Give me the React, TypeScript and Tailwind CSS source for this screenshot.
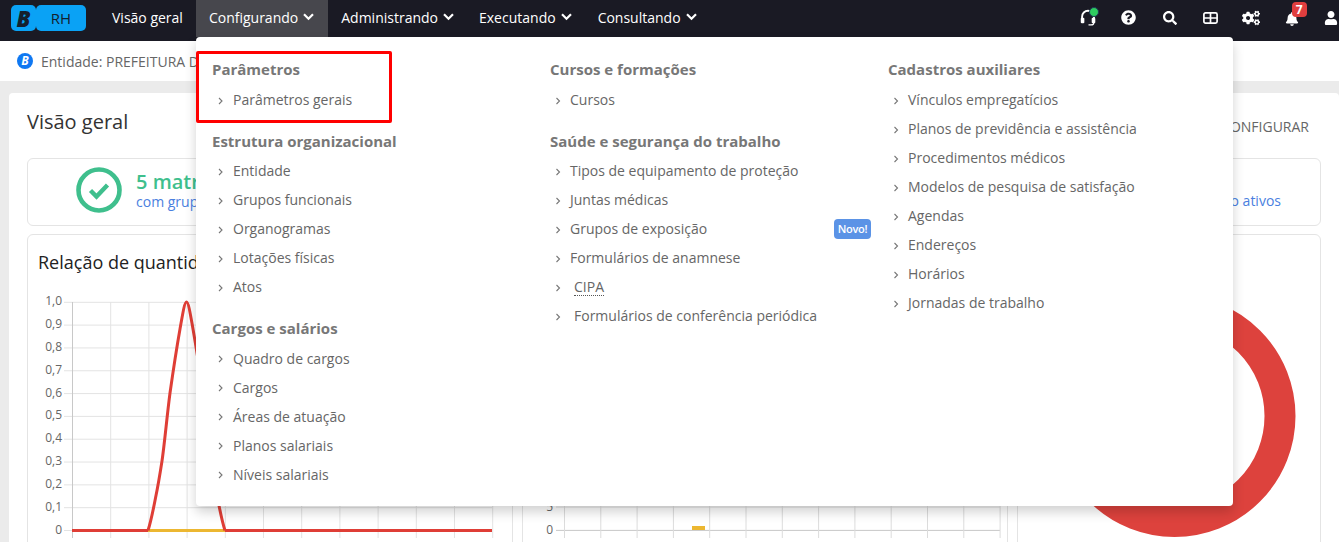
import React from "react";
import { FaBell, FaCogs, FaQuestionCircle, FaSearch, FaUser } from "react-icons/fa";

const Chevron = ({ w = 11 }: { w?: number }) => (
  <svg width={w} height={w * 0.7} viewBox="0 0 11 7.7" className="ml-[5px]" fill="none" stroke="#fff" strokeWidth="2.2">
    <path d="M1 1.2 5.5 5.7 10 1.2" />
  </svg>
);

const NavItem = ({
  label,
  active,
  chevron = true,
  pad = "px-[13px]",
}: {
  label: string;
  active?: boolean;
  chevron?: boolean;
  pad?: string;
}) => (
  <div className={`flex h-[37px] items-center pb-[3px] text-[14px] text-white ${pad} ${active ? "bg-[#47474d]" : ""}`}>
    <span>{label}</span>
    {chevron && <Chevron />}
  </div>
);

const IconCell = ({ children, last }: { children: React.ReactNode; last?: boolean }) => (
  <div className={`relative flex h-[35px] items-center justify-center text-white ${last ? "w-[37.2px]" : "w-[40.8px]"}`}>
    {children}
  </div>
);

const Headset = () => (
  <svg width="17" height="17" viewBox="0 0 18 18" fill="none">
    <path d="M2.2 11V8.2a6.3 6.3 0 0 1 12.6 0V11" stroke="#fff" strokeWidth="2" />
    <rect x="0.8" y="9.2" width="3.8" height="6" rx="1.2" fill="#fff" />
    <rect x="12.4" y="9.2" width="3.8" height="6" rx="1.2" fill="#fff" />
    <path d="M14.6 14.5c0 1.8-1.4 2.4-3 2.4H9" stroke="#fff" strokeWidth="1.3" />
  </svg>
);

const TableIcon = () => (
  <svg width="15" height="12" viewBox="0 0 15 12" fill="none" stroke="#fff" strokeWidth="1.7">
    <rect x="0.9" y="0.9" width="13.2" height="10.2" rx="1.6" />
    <path d="M7.5 1v10M1 6h13" />
  </svg>
);

const Row = ({
  label,
  extra,
  cipa,
  badge,
}: {
  label: string;
  extra?: boolean;
  cipa?: boolean;
  badge?: boolean;
}) => (
  <div className="flex h-[29px] items-center text-[14px] text-[#666]">
    <svg width="20" height="8" viewBox="0 0 20 8" fill="none" stroke="#777" strokeWidth="1.1" className="mt-[2px] shrink-0">
      <path d="M6.5 1 9.5 4 6.5 7" />
    </svg>
    <span className={`${extra ? "ml-[4px]" : ""} ${cipa ? "border-b border-dotted border-[#555] leading-[17px]" : ""}`}>{label}</span>
    {badge && (
      <span className="ml-auto flex h-[20px] w-[37px] items-center justify-center rounded-[4px] bg-[#5b93e6] text-[11px] font-semibold tracking-[-0.3px] text-white">
        Novo!
      </span>
    )}
  </div>
);

const Section = ({ title, first, children }: { title: string; first?: boolean; children: React.ReactNode }) => (
  <div className="mb-[16.9px]">
    <div className={`${first ? "mb-[6.5px]" : "mb-[5.5px]"} text-[15px] font-bold leading-[20px] text-[#777]`}>{title}</div>
    {children}
  </div>
);

const Menu = () => (
  <div className="absolute left-[196px] top-[37px] z-20 grid h-[469px] w-[1037px] grid-cols-[338px_338px_361px] rounded-[4px] bg-white pt-[21.5px] shadow-[0_6px_12px_rgba(0,0,0,0.18)]">
    <div className="pl-[16px] pr-[1px] [&_svg]:w-[21px]">
      <Section title="Parâmetros" first>
        <Row label="Parâmetros gerais" />
      </Section>
      <Section title="Estrutura organizacional">
        <Row label="Entidade" />
        <Row label="Grupos funcionais" />
        <Row label="Organogramas" />
        <Row label="Lotações físicas" />
        <Row label="Atos" />
      </Section>
      <Section title="Cargos e salários">
        <Row label="Quadro de cargos" />
        <Row label="Cargos" />
        <Row label="Áreas de atuação" />
        <Row label="Planos salariais" />
        <Row label="Níveis salariais" />
      </Section>
    </div>
    <div className="pl-[16px] pr-[1px]">
      <Section title="Cursos e formações" first>
        <Row label="Cursos" />
      </Section>
      <Section title="Saúde e segurança do trabalho">
        <Row label="Tipos de equipamento de proteção" />
        <Row label="Juntas médicas" />
        <Row label="Grupos de exposição" badge />
        <Row label="Formulários de anamnese" />
        <Row label="CIPA" extra cipa />
        <Row label="Formulários de conferência periódica" extra />
      </Section>
    </div>
    <div className="pl-[16px] pr-[1px]">
      <Section title="Cadastros auxiliares" first>
        <Row label="Vínculos empregatícios" />
        <Row label="Planos de previdência e assistência" />
        <Row label="Procedimentos médicos" />
        <Row label="Modelos de pesquisa de satisfação" />
        <Row label="Agendas" />
        <Row label="Endereços" />
        <Row label="Horários" />
        <Row label="Jornadas de trabalho" />
      </Section>
    </div>
  </div>
);

const yLabels = ["1,0", "0,9", "0,8", "0,7", "0,6", "0,5", "0,4", "0,3", "0,2", "0,1", "0"];
const curve =
  "M148 530.4C150.5 523 153 511 155.5 498C158 486 160 474 162 461C164.5 444 167 416 170 393C173 372 177 346 180 329C182.5 315 184.5 302 186.5 302C188.5 302 190.5 315 193 329C196 346 200 372 203 393C206 416 208.5 444 211 461C213 474 215 486 217.5 498C220 511 222.5 523 225 530.4";

const ChartOne = () => (
  <svg width="484" height="260" className="mt-[10px] block overflow-hidden">
    <g transform="translate(-28,-285)">
      {yLabels.map((l, i) => {
        const y = 302.3 + i * 22.82;
        return (
          <g key={l}>
            <line x1="64" x2="492" y1={y} y2={y} stroke="#e3e3e3" />
            <text x="62" y={y + 3} textAnchor="end" fontSize="12" fill="#666">
              {l}
            </text>
          </g>
        );
      })}
      {Array.from({ length: 12 }).map((_, i) => {
        const x = 72.5 + i * 38.2;
        return <line key={i} x1={x} x2={x} y1="302" y2="538" stroke={i === 0 ? "#c8c8c8" : "#e3e3e3"} />;
      })}
      <line x1="148" x2="225" y1="530.4" y2="530.4" stroke="#ecb731" strokeWidth="3" />
      <line x1="72" x2="148" y1="530.4" y2="530.4" stroke="#df3e36" strokeWidth="3" />
      <line x1="225" x2="492" y1="530.4" y2="530.4" stroke="#df3e36" strokeWidth="3" />
      <path d={curve} fill="none" stroke="#df3e36" strokeWidth="3" strokeLinejoin="round" />
    </g>
  </svg>
);

const ChartTwo = () => (
  <svg width="484" height="260" className="mt-[46px] block overflow-hidden">
    <g transform="translate(-523,-285)">
      {[
        ["5", 507],
        ["0", 530.4],
      ].map(([l, y]) => (
        <g key={l as string}>
          <line x1="556" x2="1000" y1={y as number} y2={y as number} stroke={l === "0" ? "#c8c8c8" : "#dcdcdc"} />
          <text x="553" y={(y as number) + 4} textAnchor="end" fontSize="12" fill="#666">
            {l}
          </text>
        </g>
      ))}
      {Array.from({ length: 13 }).map((_, i) => {
        const x = 564.5 + i * 36.3;
        return <line key={i} x1={x} x2={x} y1="490" y2="538" stroke="#dcdcdc" />;
      })}
      <rect x="692" y="526" width="13" height="4" fill="#ecb731" />
    </g>
  </svg>
);

const Donut = () => (
  <svg width="302" height="260" className="mt-[46px] block overflow-hidden">
    <g transform="translate(-1018,-285)">
      <circle cx="1174.5" cy="416" r="105.5" fill="none" stroke="#dd423d" strokeWidth="31" />
    </g>
  </svg>
);

export default function App() {
  return (
    <div className="relative h-[542px] w-full overflow-hidden bg-[#ebebeb] font-['Open_Sans',sans-serif]">
      {/* top bar */}
      <header className="flex h-[41px] items-start bg-[#1a1a24]">
        <div className="ml-[11px] mt-[5px] flex h-[26px] w-[75px] shrink-0 text-[#14202e]">
          <div className="flex w-[25px] items-center justify-center rounded-[5px] bg-[#0aa2f5] text-[22px] font-extrabold italic leading-none">
            B
          </div>
          <div className="flex flex-1 items-center justify-center rounded-[5px] bg-[#0aa2f5] text-[15px]">RH</div>
        </div>
        <nav className="ml-[13px] flex">
          <NavItem label="Visão geral" chevron={false} />
          <NavItem label="Configurando" active pad="pl-[13px] pr-[14px]" />
          <NavItem label="Administrando" pad="pl-[13px] pr-[12px]" />
          <NavItem label="Executando" />
          <NavItem label="Consultando" />
        </nav>
        <div className="ml-auto mr-[-10.6px] flex">
          <IconCell>
            <Headset />
            <span className="absolute left-[21px] top-[7px] h-[10px] w-[10px] rounded-full border-[1.5px] border-[#1d3a56] bg-[#2ecc5f]" />
          </IconCell>
          <IconCell>
            <FaQuestionCircle size={15} />
          </IconCell>
          <IconCell>
            <FaSearch size={14} />
          </IconCell>
          <IconCell>
            <TableIcon />
          </IconCell>
          <IconCell>
            <FaCogs size={18} />
          </IconCell>
          <IconCell>
            <FaBell size={14} className="mt-[2px]" />
            <span className="absolute left-[20px] top-[2px] flex h-[15px] w-[15px] items-center justify-center rounded-[4px] bg-[#e03e3e] text-[12px] font-bold leading-none text-white">
              7
            </span>
          </IconCell>
          <IconCell last>
            <FaUser size={14} />
          </IconCell>
        </div>
      </header>

      {/* entity bar */}
      <div className="flex h-[40px] items-center bg-white pl-[17px] text-[14px] text-[#666]">
        <span className="flex h-[16px] w-[16px] items-center justify-center rounded-full bg-[#0f78f2] text-[12px] font-bold italic leading-none text-white">
          B
        </span>
        <span className="ml-[8px]">Entidade: PREFEITURA DE</span>
      </div>

      {/* page card */}
      <main className="ml-[9px] mt-[12px] h-[460px] rounded-t-[4px] bg-white px-[18px] pt-[15px]">
        <div className="flex h-[50px] items-start justify-between">
          <h1 className="text-[20px] leading-[28px] text-[#333]">Visão geral</h1>
          <span className="mr-[12px] mt-[9px] text-[14px] leading-[20px] text-[#666]">CONFIGURAR</span>
        </div>

        <section className="flex h-[68px] items-center justify-between rounded-[6px] border border-[#e4e4e4] pl-[48px] pr-[39px]">
          <div className="flex items-center">
            <svg width="46" height="46" viewBox="0 0 46 46" fill="none" className="mb-[4px] shrink-0">
              <circle cx="23" cy="23" r="20.5" stroke="#3fbf8d" strokeWidth="4.6" />
              <path d="M14.5 23.5 20.5 29.5 31.5 18" stroke="#3fbf8d" strokeWidth="4.4" />
            </svg>
            <div className="mb-[4px] ml-[14px]">
              <div className="text-[20px] font-semibold leading-[24px] text-[#3fbf8d]">5 matrículas</div>
              <div className="text-[14px] leading-[16px] text-[#4a7fe0]">com grupos</div>
            </div>
          </div>
          <div className="mt-[17px] text-[14px] leading-[16px] text-[#4a7fe0]">estão ativos</div>
        </section>

        <div className="mt-[8px] flex gap-[9px]">
          <section className="h-[320px] w-[486px] shrink-0 rounded-[6px] border border-[#e4e4e4] pt-[14px]">
            <h2 className="pl-[10px] text-[18px] leading-[26px] text-[#222]">Relação de quantidade</h2>
            <ChartOne />
          </section>
          <section className="h-[320px] w-[486px] shrink-0 rounded-[6px] border border-[#e4e4e4] pt-[4px]">
            <ChartTwo />
          </section>
          <section className="h-[320px] w-[304px] shrink-0 rounded-[6px] border border-[#e4e4e4] pt-[4px]">
            <Donut />
          </section>
        </div>
      </main>

      <Menu />
      {/* highlight annotation */}
      <div className="absolute left-[196px] top-[51px] z-30 h-[72px] w-[196px] rounded-[2px] border-[3px] border-[#ff0000]" />
    </div>
  );
}
